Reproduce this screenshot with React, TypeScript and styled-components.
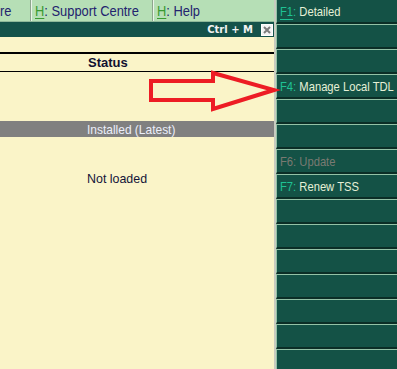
import React from 'react';
import styled, { createGlobalStyle } from 'styled-components';

const GlobalStyle = createGlobalStyle`
  html, body {
    margin: 0;
    padding: 0;
    background: #faf4c8;
  }
  body {
    font-family: 'Liberation Sans', Arial, sans-serif;
  }
`;

const Screen = styled.div`
  position: relative;
  display: flex;
  width: 397px;
  height: 369px;
  overflow: hidden;
`;

const LeftPanel = styled.div`
  display: flex;
  flex-direction: column;
  width: 274px;
  background: #faf4c8;
`;

const MenuBar = styled.div`
  display: flex;
  height: 22px;
  background: #b6dfb6;
  border-bottom: 1px solid #8fb89a;
  box-sizing: border-box;
`;

const MenuItem = styled.div<{ $width: number }>`
  display: flex;
  align-items: center;
  width: ${(p) => p.$width}px;
  padding-left: 3px;
  box-sizing: border-box;
  white-space: nowrap;
  overflow: hidden;
  border-left: 1px solid #eaf6ea;
  border-right: 1px solid #8ea58e;

  &:first-child {
    padding-left: 0;
    border-left: none;
  }
  &:last-child {
    border-right: none;
  }
`;

// Tally draws its captions in a tall, narrow face; squeeze Liberation Sans to match
const MenuLabel = styled.span`
  display: inline-block;
  font-size: 14px;
  color: #23236e;
  transform: scaleX(0.92);
  transform-origin: left center;
`;

const HotKey = styled.span`
  color: #3a9a32;
  text-decoration: underline;
  text-underline-offset: 2px;
`;

const TitleBar = styled.div`
  display: flex;
  align-items: center;
  justify-content: flex-end;
  gap: 8px;
  height: 15px;
  padding-right: 1px;
  background: #14524a;
`;

const Shortcut = styled.span`
  font-family: 'DejaVu Sans', Verdana, sans-serif;
  font-size: 10px;
  font-weight: bold;
  color: #f2f2f2;
`;

const CloseBox = styled.div`
  display: flex;
  align-items: center;
  justify-content: center;
  width: 12px;
  height: 12px;
  box-sizing: border-box;
  border: 1px solid #ffffff;
  background: #f4f4f4;
`;

const Content = styled.div`
  display: flex;
  flex-direction: column;
  padding-top: 15px;
  flex: 1;
`;

const TableHeader = styled.div`
  height: 17px;
  padding-left: 88px;
  display: flex;
  align-items: center;
  border-top: 2px solid #000;
  border-bottom: 1px solid #000;
  font-size: 13px;
  font-weight: bold;
  color: #101030;
`;

const GroupBar = styled.div`
  margin-top: 49px;
  height: 16px;
  display: flex;
  align-items: center;
  padding-left: 87px;
  background: #808080;
  font-size: 13px;
  color: #eceefa;

  span {
    display: inline-block;
    transform: scaleX(0.92);
    transform-origin: left center;
  }
`;

const StatusText = styled.div`
  margin-top: 34px;
  padding-left: 87px;
  font-size: 13.5px;
  line-height: 15px;
  color: #14143a;

  span {
    display: inline-block;
    transform: scaleX(0.92);
    transform-origin: left center;
  }
`;

const Divider = styled.div`
  width: 3px;
  border-left: 2px solid #c8ccc0;
  background: #223a30;
  box-sizing: border-box;
`;

const RightPanel = styled.div`
  display: flex;
  flex-direction: column;
  flex: 1;
  margin-top: -1px;
  background: #0b2e26;
`;

const KeyButton = styled.div`
  flex: 0 0 25px;
  display: flex;
  align-items: center;
  padding-left: 3px;
  box-sizing: border-box;
  background: #145246;
  border-top: 1px solid #93c2a6;
  border-left: 1px solid #93c2a6;
  border-bottom: 2px solid #0b2e26;
  white-space: nowrap;
  overflow: hidden;
`;

const KeyLabel = styled.span<{ $disabled?: boolean }>`
  display: inline-block;
  font-size: 13.5px;
  color: ${(p) => (p.$disabled ? '#7a7a72' : '#e6f0d6')};
  transform: scaleX(0.83);
  transform-origin: left center;
`;

const FKey = styled.span<{ $disabled?: boolean; $focused?: boolean }>`
  color: ${(p) => (p.$disabled ? '#7a7a72' : '#1fc294')};
  text-decoration: ${(p) => (p.$focused ? 'underline' : 'none')};
  text-underline-offset: 3px;
`;

const Arrow = styled.svg`
  position: absolute;
  left: 0;
  top: 0;
  pointer-events: none;
`;

const buttons: { key?: string; label?: string; disabled?: boolean }[] = [
  { key: 'F1', label: 'Detailed' },
  {},
  {},
  { key: 'F4', label: 'Manage Local TDL' },
  {},
  {},
  { key: 'F6', label: 'Update', disabled: true },
  { key: 'F7', label: 'Renew TSS' },
  {},
  {},
  {},
  {},
  {},
  {},
  {},
];

const App = () => (
  <Screen>
    <GlobalStyle />
    <LeftPanel>
      <MenuBar>
        <MenuItem $width={31}>
          <MenuLabel>re</MenuLabel>
        </MenuItem>
        <MenuItem $width={122}>
          <MenuLabel>
            <HotKey>H</HotKey>: Support Centre
          </MenuLabel>
        </MenuItem>
        <MenuItem $width={121}>
          <MenuLabel>
            <HotKey>H</HotKey>: Help
          </MenuLabel>
        </MenuItem>
      </MenuBar>
      <TitleBar>
        <Shortcut>Ctrl + M</Shortcut>
        <CloseBox>
          <svg width="8" height="8" viewBox="0 0 8 8">
            <path d="M1 1 L7 7 M7 1 L1 7" stroke="#7c7c7c" strokeWidth="2" />
          </svg>
        </CloseBox>
      </TitleBar>
      <Content>
        <TableHeader>Status</TableHeader>
        <GroupBar>
          <span>Installed (Latest)</span>
        </GroupBar>
        <StatusText>
          <span>Not loaded</span>
        </StatusText>
      </Content>
    </LeftPanel>
    <Divider />
    <RightPanel>
      {buttons.map((b, i) => (
        <KeyButton key={i}>
          {b.key && (
            <KeyLabel $disabled={b.disabled}>
              <FKey $disabled={b.disabled} $focused={i === 0}>
                {b.key}
              </FKey>
              <FKey $disabled={b.disabled}>:</FKey> {b.label}
            </KeyLabel>
          )}
        </KeyButton>
      ))}
    </RightPanel>
    <Arrow width="397" height="369" viewBox="0 0 397 369">
      <polygon
        points="151,81 213,81 213,73 274,90 213,109 213,100 151,100"
        fill="none"
        stroke="#ed1c24"
        strokeWidth="4"
        strokeLinejoin="miter"
      />
    </Arrow>
  </Screen>
);

export default App;
